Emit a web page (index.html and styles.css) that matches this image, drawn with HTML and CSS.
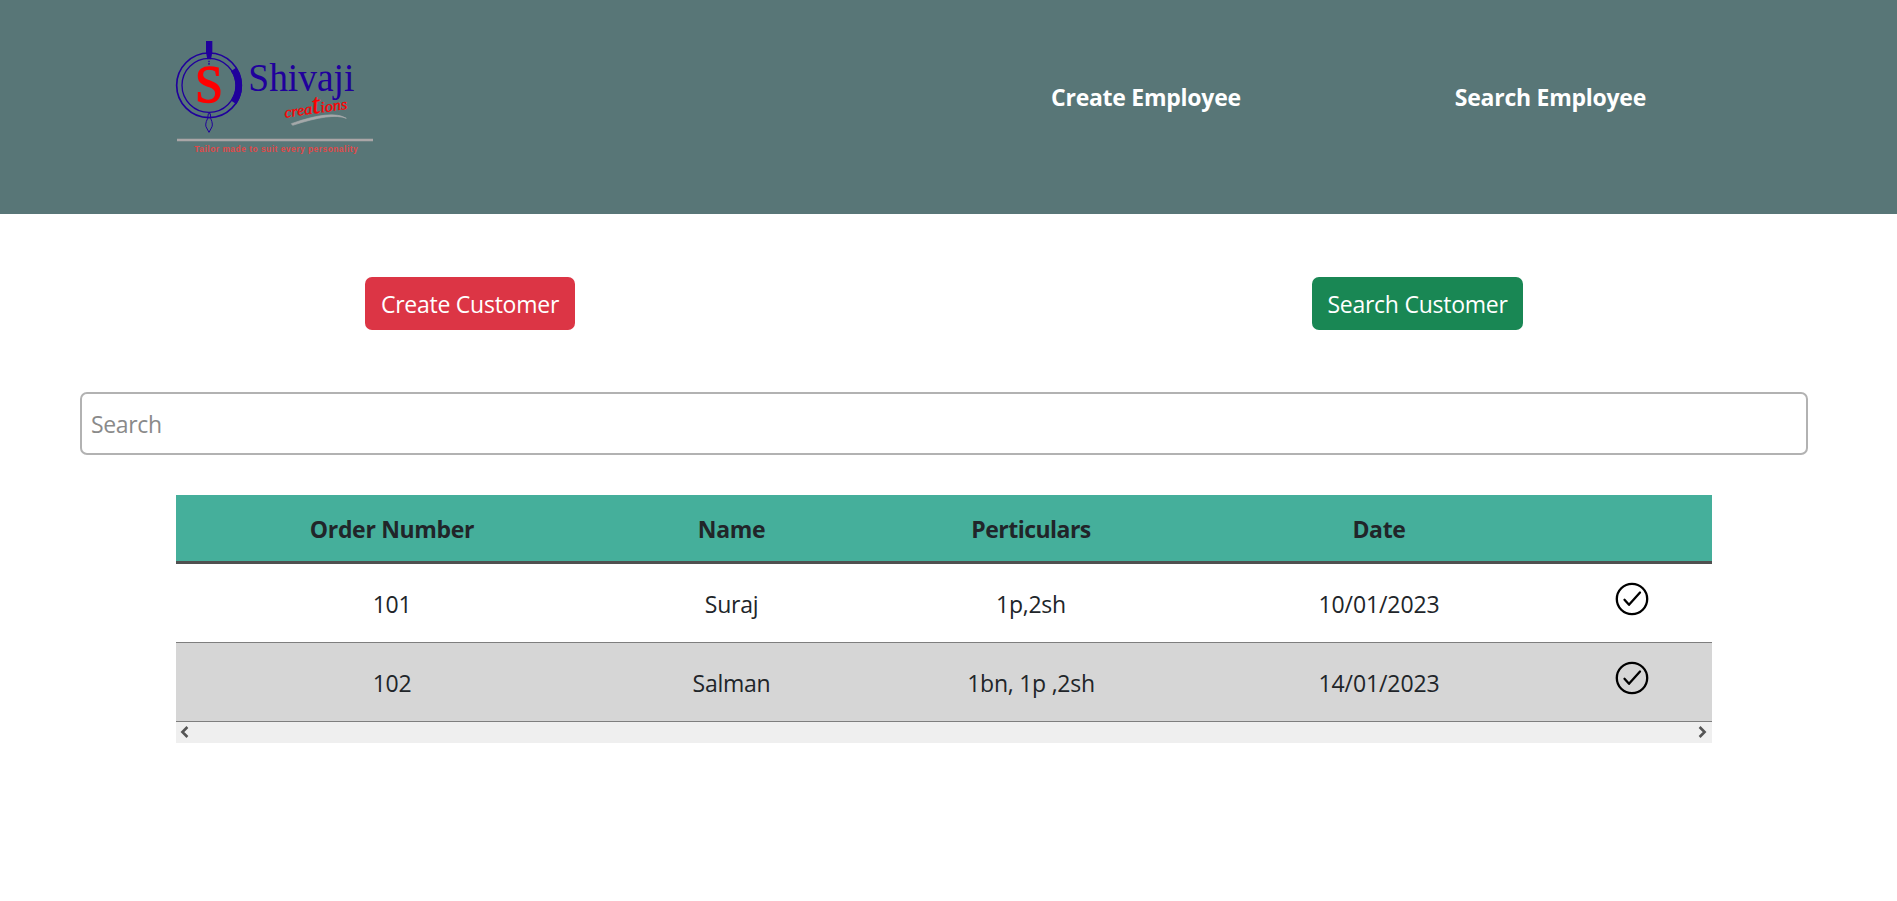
FILE: index.html
```html
<!DOCTYPE html>
<html lang="en">
<head>
<meta charset="utf-8">
<title>Shivaji Creations</title>
<link rel="stylesheet" href="styles.css">
</head>
<body>
<header class="header">
  <svg class="logo" viewBox="0 0 660 405">
    <g fill="none" stroke="#20009c">
      <circle cx="132" cy="166" r="97" stroke-width="5"/>
      <circle cx="132" cy="166" r="81" stroke-width="4"/>
      <path d="M206 118A88 88 0 0 1 206 217" stroke-width="20"/>
      <path d="M130 251h6l1 14q9 20 2 29l-7 13l-7-13q-7-9 3-29z" stroke-width="3"/>
    </g>
    <path d="M123 33h19v34l-4 21h-11l-4-21z" fill="#20009c"/>
    <path d="M132 92v12" stroke="#20009c" stroke-width="4" stroke-dasharray="5 2"/>
    <text class="logo-s" x="90" y="217" textLength="84" lengthAdjust="spacingAndGlyphs">S</text>
    <text class="logo-name" x="250" y="182" textLength="318" lengthAdjust="spacingAndGlyphs">Shivaji</text>
    <text class="logo-script" x="360" y="263" textLength="190" lengthAdjust="spacingAndGlyphs" transform="rotate(-8 360 263)">crea<tspan class="logo-tall">t</tspan>ions</text>
    <path d="M379 281Q500 238 544 265Q500 247 383 286Z" fill="#a5a9aa" stroke="#a5a9aa" stroke-width="2"/>
    <path d="M36 330H624" stroke="#aaa6a7" stroke-width="8"/>
    <text class="logo-tag" x="88" y="365" textLength="490">Tailor made to suit every personality</text>
  </svg>
  <nav class="nav">
    <a>Create Employee</a>
    <a>Search Employee</a>
  </nav>
</header>
<main>
  <div class="actions">
    <div class="action"><button class="btn btn-danger">Create Customer</button></div>
    <div class="action"><button class="btn btn-success">Search Customer</button></div>
  </div>
  <input class="search" type="text" placeholder="Search">
  <div class="table-wrap">
    <table class="orders">
      <colgroup><col class="c1"><col class="c2"><col class="c3"><col class="c4"><col class="c5"></colgroup>
      <thead>
        <tr><th>Order Number</th><th>Name</th><th class="th-part">Perticulars</th><th>Date</th><th></th></tr>
      </thead>
      <tbody>
        <tr><td>101</td><td>Suraj</td><td>1p,2sh</td><td class="date">10/01/2023</td>
          <td class="status"><svg class="check" viewBox="0 0 34 34"><circle cx="17" cy="17" r="15.2"/><path d="M9.5 17.8L14 22.8L25 10.5"/></svg></td></tr>
        <tr><td>102</td><td>Salman</td><td>1bn, 1p ,2sh</td><td class="date">14/01/2023</td>
          <td class="status"><svg class="check" viewBox="0 0 34 34"><circle cx="17" cy="17" r="15.2"/><path d="M9.5 17.8L14 22.8L25 10.5"/></svg></td></tr>
      </tbody>
    </table>
    <div class="scrollbar">
      <svg class="arrow" viewBox="0 0 9 12"><path d="M7.4 1L2.4 6L7.4 11"/></svg>
      <svg class="arrow" viewBox="0 0 9 12"><path d="M1.6 1L6.6 6L1.6 11"/></svg>
    </div>
  </div>
</main>
</body>
</html>
```
FILE: styles.css
```css
* { box-sizing: border-box; }
body {
  margin: 0;
  font-family: "Open Sans", "Noto Sans", sans-serif;
  font-size: 23px;
  line-height: 36px;
  color: #212529;
  background: #fff;
}
.header {
  display: flex;
  justify-content: space-between;
  height: 214px;
  padding: 30px 251px 0 165px;
  background: #587677;
}
.logo { width: 220px; height: 135px; }
.logo-s { font: 158px "Liberation Serif", serif; fill: #f00; stroke: #f00; stroke-width: 4; }
.logo-name { font: 120px "Liberation Serif", serif; fill: #20009c; }
.logo-script { font: italic 46px "Liberation Serif", serif; fill: #f00; stroke: #f00; stroke-width: 1; }
.logo-tall { font-size: 84px; }
.logo-tag { font: bold 25px "Liberation Sans", sans-serif; fill: #e04848; }
.nav { display: flex; gap: 214px; padding-top: 49px; color: #fff; font-weight: 700; letter-spacing: -0.26px; white-space: nowrap; }
.actions { display: flex; height: 178px; padding-top: 63px; }
.action { flex: 0 0 940px; display: flex; justify-content: center; align-items: flex-start; }
.action + .action { flex-basis: 955px; }
.btn {
  height: 53px;
  width: 210px;
  padding: 0;
  border: 0;
  border-radius: 7px;
  color: #fff;
  font: inherit;
  letter-spacing: -0.25px;
  white-space: nowrap;
}
.btn-danger { background: #dc3545; }
.btn-success { width: 211px; background: #198754; }
.search {
  display: block;
  width: 1728px;
  height: 63px;
  margin-left: 80px;
  padding: 0 9px;
  border: 2px solid #b2b2b2;
  border-radius: 7px;
  font: inherit;
  letter-spacing: -0.35px;
}
.search::placeholder { color: #8a8a8a; opacity: 1; }
.table-wrap { width: 1536px; margin: 40px 0 0 176px; }
.orders { width: 1536px; table-layout: fixed; border-collapse: separate; border-spacing: 0; text-align: center; }
.c1 { width: 432px; }
.c2 { width: 247px; }
.c3 { width: 352px; }
.c4 { width: 344px; }
.c5 { width: 161px; }
.orders th { height: 69px; padding: 2px 0 0; background: #45af9b; border-bottom: 3px solid #505050; letter-spacing: -0.32px; }
.orders .th-part { letter-spacing: -0.52px; }
.orders td { height: 79px; padding: 2px 0 0; border-bottom: 1px solid #7e7e7e; letter-spacing: -0.25px; }
.orders .date { letter-spacing: -0.1px; }
.orders tbody tr:nth-child(2) { background: #d6d6d6; }
.orders .status { padding: 0 0 8px; line-height: 0; }
.check { width: 34px; height: 34px; fill: none; stroke: #000; stroke-width: 2.3; stroke-linecap: round; stroke-linejoin: round; }
.scrollbar { display: flex; justify-content: space-between; align-items: center; height: 21px; padding: 0 5px 1px 4px; background: #efefef; }
.arrow { width: 9px; height: 12px; fill: none; stroke: #555; stroke-width: 2.6; }
```
